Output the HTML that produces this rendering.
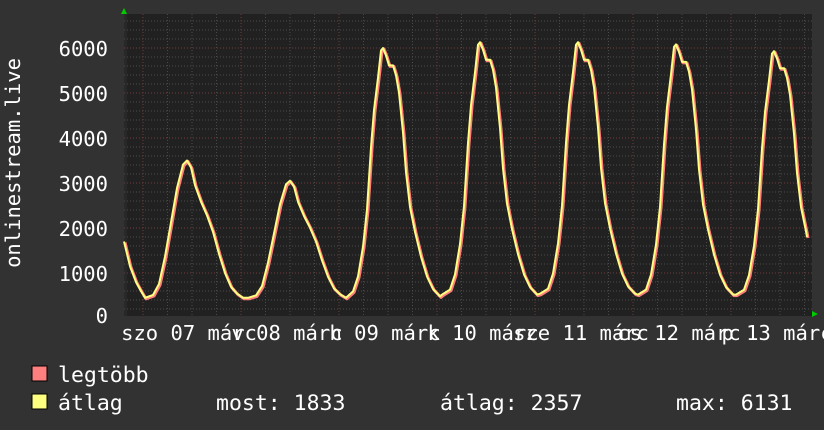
<!DOCTYPE html>
<html><head><meta charset="utf-8"><style>
html,body{margin:0;padding:0;background:#323232;}
svg{display:block}
text{font-family:"DejaVu Sans Mono","Liberation Mono",monospace;fill:#fff;font-size:20.5px}
.lg{font-size:21.5px}
</style></head><body>
<svg id="s" width="824" height="430" xmlns="http://www.w3.org/2000/svg">
<rect width="824" height="430" fill="#323232"/>
<rect x="124" y="14" width="688" height="302" fill="#212121"/>
<rect x="124" y="14" width="3" height="302" fill="#282828"/>
<g id="grid"></g>
<path id="pk" d="" fill="none" stroke="#ff7f7f" stroke-width="3" stroke-linejoin="round"/>
<path id="av" d="" fill="none" stroke="#ffff7f" stroke-width="2" stroke-linejoin="round"/>
<polygon points="121,14 127,14 124,8" fill="#00cc00"/>
<polygon points="812,311 812,317 818,314" fill="#00cc00"/>
<text x="108" y="56" text-anchor="end">6000</text>
<text x="108" y="101" text-anchor="end">5000</text>
<text x="108" y="146" text-anchor="end">4000</text>
<text x="108" y="191" text-anchor="end">3000</text>
<text x="108" y="236" text-anchor="end">2000</text>
<text x="108" y="281" text-anchor="end">1000</text>
<text x="108" y="323" text-anchor="end">0</text>
<text transform="translate(20,163) rotate(-90)" text-anchor="middle">onlinestream.live</text>
<text x="189" y="340" text-anchor="middle">szo 07 márc</text>
<text x="287" y="340" text-anchor="middle">v 08 márc</text>
<text x="385" y="340" text-anchor="middle">h 09 márc</text>
<text x="483" y="340" text-anchor="middle">k 10 márc</text>
<text x="581" y="340" text-anchor="middle">sze 11 márc</text>
<text x="679" y="340" text-anchor="middle">cs 12 márc</text>
<text x="777" y="340" text-anchor="middle">p 13 márc</text>
<rect x="32" y="366" width="15" height="15" fill="#ff7f7f" stroke="#000" stroke-width="1"/>
<rect x="32" y="394" width="15" height="15" fill="#ffff7f" stroke="#000" stroke-width="1"/>
<text class="lg" x="58" y="382">legtöbb</text>
<text class="lg" x="58" y="410">átlag</text>
<text class="lg" x="216" y="410">most: 1833</text>
<text class="lg" x="440" y="410">átlag: 2357</text>
<text class="lg" x="676" y="410">max: 6131</text>
</svg>
<script>
var g=document.getElementById('grid'),h='';
function Y(v){return 318-v*0.045;}
for(var v=200;v<=6800;v+=200){var y=Y(v);if(y<14)break;var maj=v%1000==0;
h+='<line x1="124" x2="812" y1="'+y+'" y2="'+y+'" stroke="'+(maj?'#6e3a3a':'#4a4a4a')+'" stroke-dasharray="1,2"/>';}
for(var x=143-98;x<812;x+=24.5){if(x<126)continue;var d=Math.round((x-143)/24.5);var maj=d%4==0;
h+='<line y1="14" y2="316" x1="'+x+'" x2="'+x+'" stroke="'+(maj?'#6e3a3a':'#4a4a4a')+'" stroke-dasharray="1,2"/>';}
g.innerHTML=h;
var T=[[0,0],[8,.02],[13,.08],[18,.2],[22,.35],[26,.6],[29,.75],[33,.88],[36,.99],[38,1],[41,.97],[44,.93],[48,.93],[51,.89],[54,.82],[58,.66],[61,.5],[65,.36],[70,.26],[76,.16],[82,.08],[88,.03],[95,0]];
var T1=[[0,0],[8,.02],[14,.1],[20,.3],[26,.55],[32,.8],[38,.97],[42,1],[46,.95],[50,.82],[56,.7],[62,.6],[68,.48],[74,.32],[80,.18],[86,.08],[92,.03],[98,0]];
var days=[[145,3500,450,T1],[248,3050,450,T1],[345,6000,480,T],[442,6130,520,T],[540,6130,540,T],[638,6080,520,T],[736,5930,520,T]];
var pts=[[124,1700],[130,1150],[136,800],[141,600]];
days.forEach(function(d){d[3].forEach(function(t){var x=d[0]+t[0];if(x>807)return;if(pts.length&&x<=pts[pts.length-1][0])return;pts.push([x,d[2]+t[1]*(d[1]-d[2])]);});});
pts.push([807,1800]);
var p='M'+pts.map(function(q){return q[0]+','+Y(q[1]).toFixed(1)}).join(' L');
var p2='M'+pts.map(function(q){return (q[0]+1)+','+(Y(q[1])+1).toFixed(1)}).join(' L');
document.getElementById('av').setAttribute('d',p);
document.getElementById('pk').setAttribute('d',p2);
</script>
</body></html>
